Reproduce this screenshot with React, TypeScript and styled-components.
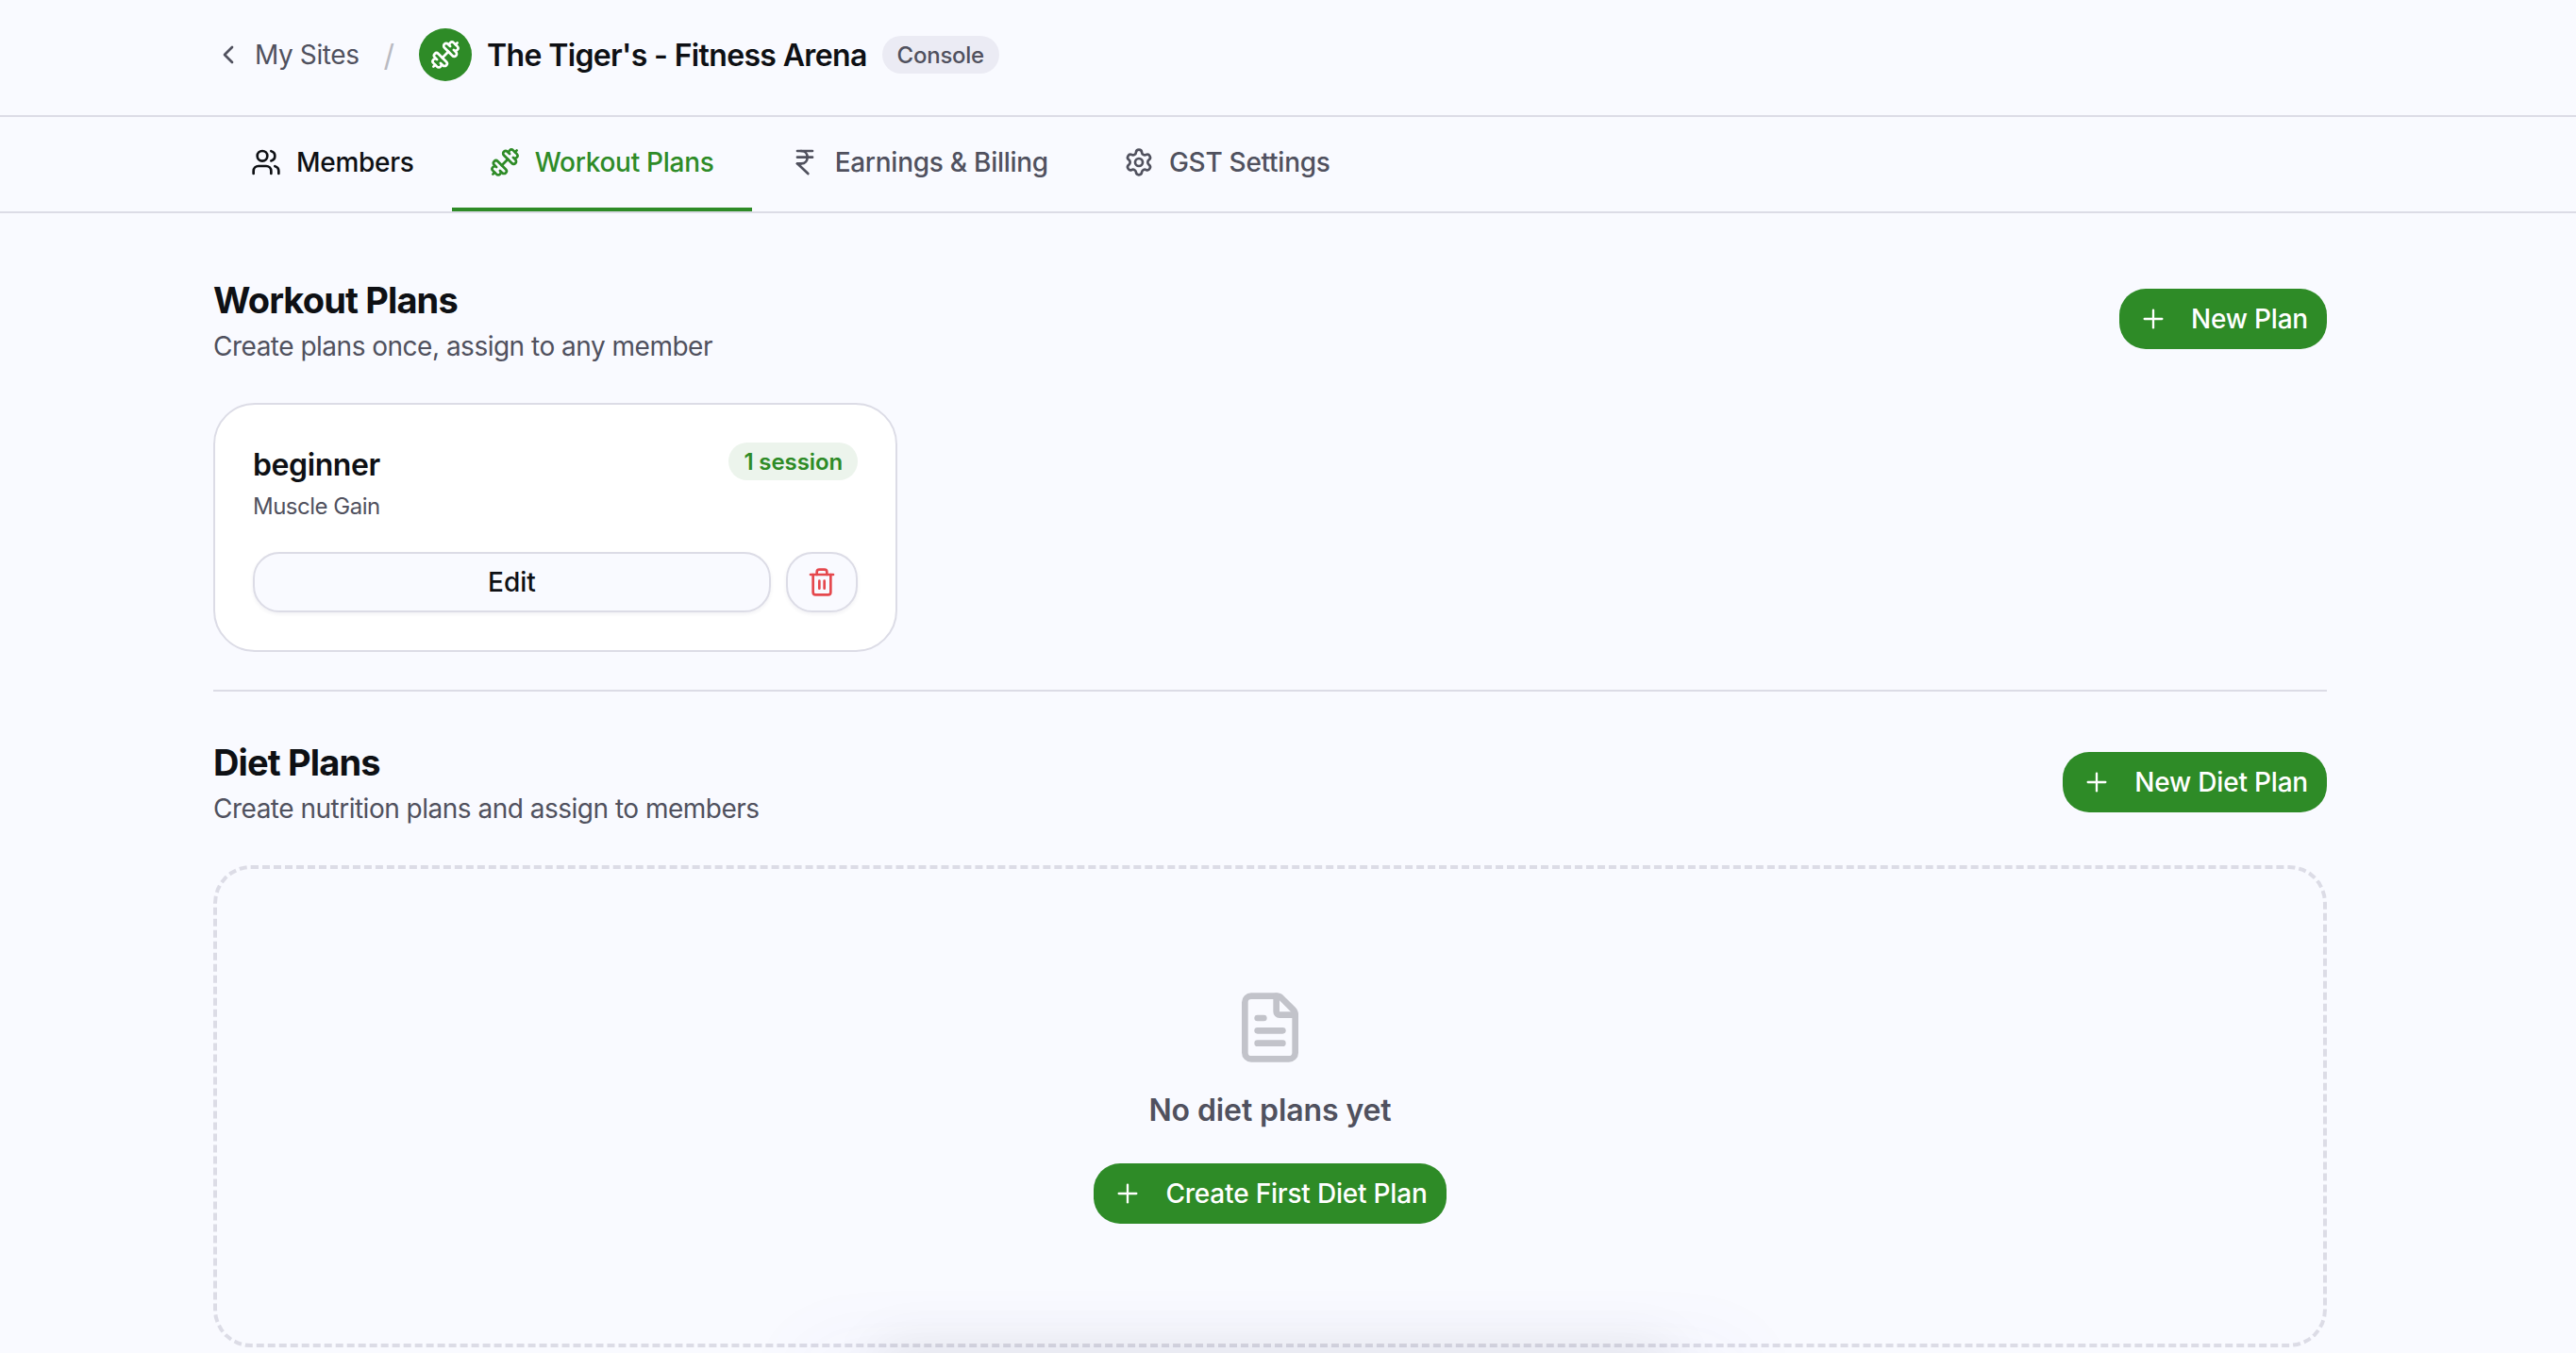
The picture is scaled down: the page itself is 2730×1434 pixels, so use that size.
import React from 'react'
import styled, { createGlobalStyle } from 'styled-components'
import {
  ChevronLeft,
  Dumbbell,
  FileText,
  IndianRupee,
  Plus,
  Settings,
  Trash2,
  Users,
} from 'lucide-react'

const GREEN = '#2e8b27'
const INK = '#0e1014'
const MUTED = '#50515e'
const LINE = '#dcdce6'
const PAGE = '#f9faff'

const GlobalStyle = createGlobalStyle`
  html, body {
    margin: 0;
    height: 100%;
    background: ${PAGE};
    overflow: hidden;
  }
  * {
    box-sizing: border-box;
  }
  body {
    font-family: Inter, "Liberation Sans", sans-serif;
    color: ${INK};
  }
`

const Page = styled.div`
  position: relative;
  height: 1434px;
  overflow: hidden;
`

const TopBar = styled.header`
  display: flex;
  align-items: center;
  padding: 30px 264px 36px 226px;
  border-bottom: 2px solid ${LINE};
`

const BackLink = styled.a`
  display: flex;
  align-items: center;
  gap: 12px;
  font-size: 28px;
  letter-spacing: -0.4px;
  color: ${MUTED};
`

const Slash = styled.span`
  margin: 0 26px;
  font-size: 32px;
  color: #b9bac2;
`

const Avatar = styled.div`
  width: 56px;
  height: 56px;
  border-radius: 50%;
  background: ${GREEN};
  color: #fff;
  display: flex;
  align-items: center;
  justify-content: center;
`

const SiteName = styled.h1`
  margin: 0 16px;
  font-size: 32px;
  font-weight: 600;
  letter-spacing: -0.65px;
`

const ConsoleBadge = styled.span`
  height: 40px;
  padding: 0 16px;
  border-radius: 20px;
  background: #ebebf4;
  color: ${MUTED};
  font-size: 24px;
  font-weight: 500;
  letter-spacing: -0.25px;
  display: flex;
  align-items: center;
`

const TabBar = styled.nav`
  display: flex;
  padding: 0 264px 0 226px;
  border-bottom: 2px solid ${LINE};
`

const Tab = styled.a<{ $active?: boolean; $dark?: boolean }>`
  height: 100px;
  padding: 0 40px;
  display: flex;
  align-items: center;
  gap: 16px;
  font-size: 28px;
  font-weight: 500;
  letter-spacing: -0.27px;
  color: ${(p) => (p.$active ? GREEN : p.$dark ? INK : MUTED)};
  border-bottom: 4px solid ${(p) => (p.$active ? GREEN : 'transparent')};
`

const Content = styled.main`
  padding: 70px 264px 0 226px;
`

const SectionHead = styled.div<{ $gap: number }>`
  display: flex;
  justify-content: space-between;
  align-items: flex-start;
  margin-bottom: ${(p) => p.$gap}px;
`

const Title = styled.h2`
  margin: 0;
  font-size: 38px;
  line-height: 44px;
  font-weight: 700;
  letter-spacing: -0.85px;
`

const Subtitle = styled.p`
  margin: 7px 0 0;
  font-size: 28px;
  line-height: 40px;
  letter-spacing: -0.5px;
  color: ${MUTED};
`

const PrimaryButton = styled.button<{ $top?: number }>`
  height: 64px;
  margin-top: ${(p) => p.$top ?? 0}px;
  padding: 0 20px;
  border: 0;
  border-radius: 28px;
  background: ${GREEN};
  color: #fff;
  font-family: inherit;
  font-size: 28px;
  font-weight: 500;
  letter-spacing: -0.2px;
  display: flex;
  align-items: center;
  gap: 24px;
`

const PlanCard = styled.article`
  width: 725px;
  height: 264px;
  padding: 40px;
  background: #fff;
  border: 2px solid ${LINE};
  border-radius: 44px;
`

const CardTop = styled.div`
  display: flex;
  justify-content: space-between;
  align-items: flex-start;
`

const PlanName = styled.h3`
  margin: 4px 0 0;
  font-size: 32px;
  line-height: 40px;
  font-weight: 600;
  letter-spacing: -0.4px;
`

const PlanGoal = styled.p`
  margin: 4px 0 0;
  font-size: 24px;
  line-height: 40px;
  letter-spacing: -0.5px;
  color: ${MUTED};
`

const SessionBadge = styled.span`
  height: 40px;
  padding: 0 16px;
  border-radius: 20px;
  background: #ecf4ec;
  color: ${GREEN};
  font-size: 24px;
  font-weight: 600;
  letter-spacing: -0.1px;
  display: flex;
  align-items: center;
`

const CardActions = styled.div`
  display: flex;
  gap: 16px;
  margin-top: 28px;
`

const GhostButton = styled.button`
  height: 64px;
  border: 2px solid ${LINE};
  border-radius: 28px;
  background: ${PAGE};
  box-shadow: 0 2px 4px rgba(20, 20, 60, 0.06);
  color: ${INK};
  font-family: inherit;
  font-size: 28px;
  font-weight: 500;
  display: flex;
  align-items: center;
  justify-content: center;
`

const EditButton = styled(GhostButton)`
  flex: 1;
`

const DeleteButton = styled(GhostButton)`
  width: 76px;
  color: #e5484d;
`

const Divider = styled.hr`
  margin: 40px 0 53px;
  border: 0;
  border-top: 2px solid ${LINE};
`

const EmptyBox = styled.section`
  height: 511px;
  border: 4px dashed ${LINE};
  border-radius: 40px;
  display: flex;
  flex-direction: column;
  align-items: center;
  justify-content: center;
`

const EmptyIcon = styled(FileText)`
  color: ${MUTED};
  opacity: 0.32;
`

const EmptyText = styled.p`
  margin: 24px 0 32px;
  font-size: 32px;
  line-height: 48px;
  font-weight: 600;
  letter-spacing: -0.1px;
  color: ${MUTED};
`

const FloatingGlow = styled.div`
  position: absolute;
  left: 930px;
  top: 1505px;
  width: 840px;
  height: 80px;
  box-shadow:
    0 -78px 60px 0 rgba(0, 0, 0, 0.08),
    0 0 90px 80px rgba(80, 80, 200, 0.04);
`

const tabs = [
  { label: 'Members', icon: Users, dark: true },
  { label: 'Workout Plans', icon: Dumbbell, active: true },
  { label: 'Earnings & Billing', icon: IndianRupee },
  { label: 'GST Settings', icon: Settings },
]

const App: React.FC = () => (
  <Page>
    <GlobalStyle />
    <TopBar>
      <BackLink>
        <ChevronLeft size={32} />
        My Sites
      </BackLink>
      <Slash>/</Slash>
      <Avatar>
        <Dumbbell size={32} />
      </Avatar>
      <SiteName>The Tiger's - Fitness Arena</SiteName>
      <ConsoleBadge>Console</ConsoleBadge>
    </TopBar>
    <TabBar>
      {tabs.map(({ label, icon: Icon, active, dark }) => (
        <Tab key={label} $active={active} $dark={dark}>
          <Icon size={32} />
          {label}
        </Tab>
      ))}
    </TabBar>
    <Content>
      <SectionHead $gap={40}>
        <div>
          <Title>Workout Plans</Title>
          <Subtitle>Create plans once, assign to any member</Subtitle>
        </div>
        <PrimaryButton $top={10}>
          <Plus size={32} strokeWidth={1.75} />
          New Plan
        </PrimaryButton>
      </SectionHead>
      <PlanCard>
        <CardTop>
          <div>
            <PlanName>beginner</PlanName>
            <PlanGoal>Muscle Gain</PlanGoal>
          </div>
          <SessionBadge>1 session</SessionBadge>
        </CardTop>
        <CardActions>
          <EditButton>Edit</EditButton>
          <DeleteButton>
            <Trash2 size={32} />
          </DeleteButton>
        </CardActions>
      </PlanCard>
      <Divider />
      <SectionHead $gap={40}>
        <div>
          <Title>Diet Plans</Title>
          <Subtitle>Create nutrition plans and assign to members</Subtitle>
        </div>
        <PrimaryButton $top={11}>
          <Plus size={32} strokeWidth={1.75} />
          New Diet Plan
        </PrimaryButton>
      </SectionHead>
      <EmptyBox>
        <EmptyIcon size={80} />
        <EmptyText>No diet plans yet</EmptyText>
        <PrimaryButton>
          <Plus size={32} strokeWidth={1.75} />
          Create First Diet Plan
        </PrimaryButton>
      </EmptyBox>
    </Content>
    <FloatingGlow />
  </Page>
)

export default App
